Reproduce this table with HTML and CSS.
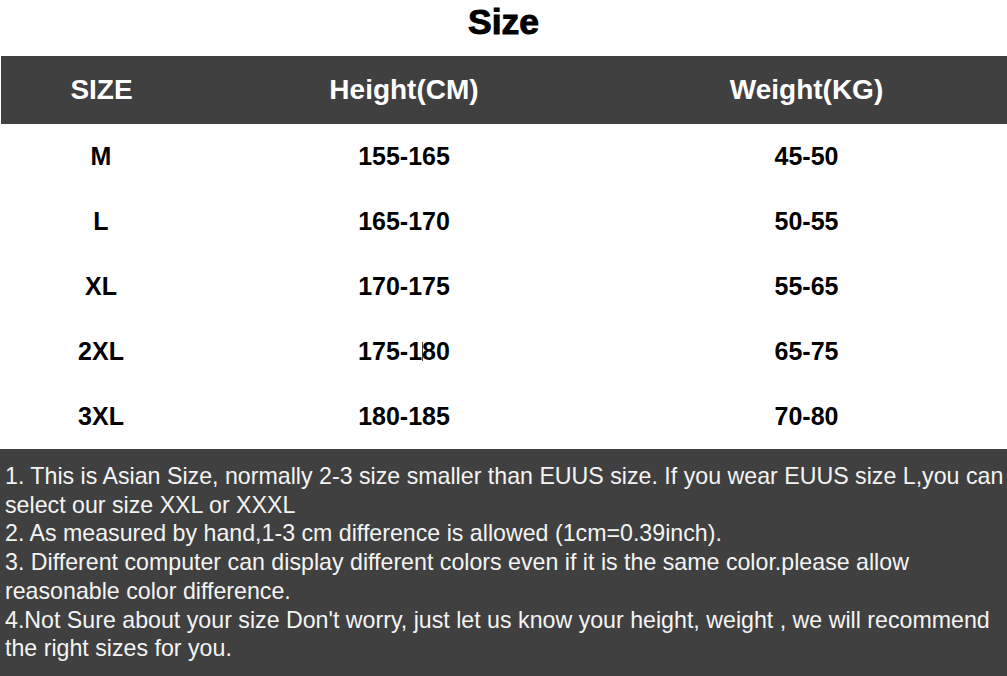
FILE: index.html
```html
<!DOCTYPE html>
<html>
<head>
<meta charset="utf-8">
<link rel="stylesheet" href="styles.css">
</head>
<body>
<div class="page">
  <h1 class="title">Size</h1>
  <div class="table">
    <div class="row head">
      <div class="cell">SIZE</div>
      <div class="cell">Height(CM)</div>
      <div class="cell">Weight(KG)</div>
    </div>
    <div class="row">
      <div class="cell">M</div>
      <div class="cell">155-165</div>
      <div class="cell">45-50</div>
    </div>
    <div class="row">
      <div class="cell">L</div>
      <div class="cell">165-170</div>
      <div class="cell">50-55</div>
    </div>
    <div class="row">
      <div class="cell">XL</div>
      <div class="cell">170-175</div>
      <div class="cell">55-65</div>
    </div>
    <div class="row">
      <div class="cell">2XL</div>
      <div class="cell">175-1<span class="caret"></span>80</div>
      <div class="cell">65-75</div>
    </div>
    <div class="row">
      <div class="cell">3XL</div>
      <div class="cell">180-185</div>
      <div class="cell">70-80</div>
    </div>
  </div>
  <div class="notes">
    <p>1. This is Asian Size, normally 2-3 size smaller than EUUS size. If you wear EUUS size L,you can select our size XXL or XXXL</p>
    <p>2. As measured by hand,1-3 cm difference is allowed (1cm=0.39inch).</p>
    <p>3. Different computer can display different colors even if it is the same color.please allow reasonable color difference.</p>
    <p>4.Not Sure about your size Don't worry, just let us know your height, weight , we will recommend the right sizes for you.</p>
  </div>
</div>
</body>
</html>
```

FILE: styles.css
```css
html, body {
  margin: 0;
  padding: 0;
  background: #ffffff;
}
body {
  font-family: "Liberation Sans", Arial, sans-serif;
  width: 1007px;
  height: 676px;
  overflow: hidden;
}
.page {
  display: flex;
  flex-direction: column;
  height: 676px;
}
.title {
  margin: 0;
  height: 56px;
  line-height: 45px;
  font-size: 35.5px;
  font-weight: bold;
  text-align: center;
  color: #000;
  -webkit-text-stroke: 1px #000;
}
.table {
  display: flex;
  flex-direction: column;
}
.row {
  display: grid;
  grid-template-columns: 202px 404px 1fr;
  height: 65px;
  align-items: center;
  font-size: 25px;
  font-weight: bold;
  color: #000;
}
.row.head {
  height: 68px;
  margin-left: 1px;
  background: #404040;
  color: #ffffff;
  font-size: 28px;
  grid-template-columns: 201px 404px 1fr;
}
.cell {
  text-align: center;
}
.caret {
  display: inline-block;
  width: 1px;
  height: 19px;
  margin-right: -1px;
  background: #444;
  vertical-align: -1px;
}
.notes {
  flex: 1;
  background: #404040;
  color: #f4f4f4;
  font-size: 23.2px;
  line-height: 28.7px;
  padding: 13px 0 0 5px;
}
.notes p {
  margin: 0;
}
```
